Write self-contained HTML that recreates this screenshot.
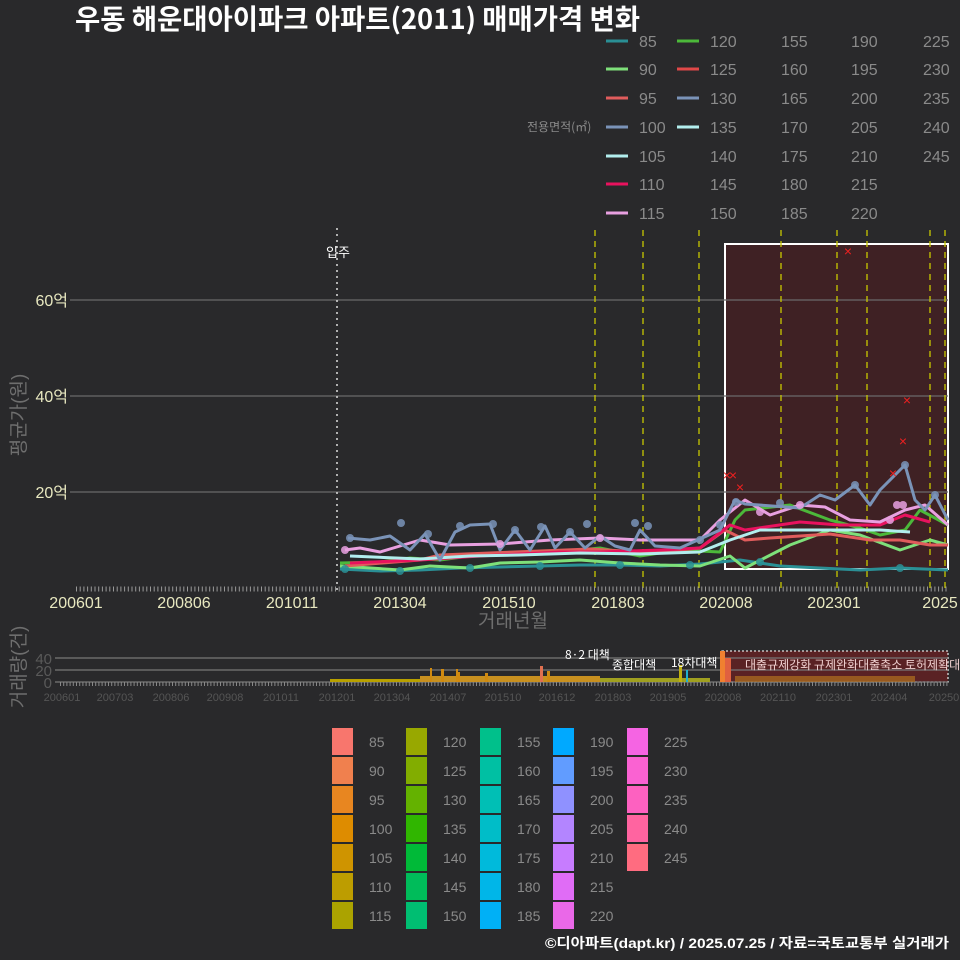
<!DOCTYPE html>
<html><head><meta charset="utf-8"><style>
body{margin:0;background:#29292b;}
svg{display:block;font-family:"Liberation Sans","Noto Sans CJK KR",sans-serif;}
</style></head><body>
<svg width="960" height="960" viewBox="0 0 960 960" xmlns="http://www.w3.org/2000/svg">
<rect width="960" height="960" fill="#29292b"/>
<text x="75" y="29" font-size="28" font-weight="bold" fill="#fff" font-family="Noto Sans CJK KR, sans-serif" textLength="565" lengthAdjust="spacingAndGlyphs">우동 해운대아이파크 아파트(2011) 매매가격 변화</text>

<!-- top legend -->
<g font-size="16" fill="#8a8a8a" font-family="Liberation Sans, sans-serif">
<text x="527" y="131" font-size="12" font-family="Noto Sans CJK KR, sans-serif">전용면적(㎡)</text>
<g stroke-width="3">
<line x1="606" y1="41" x2="628" y2="41" stroke="#2a8f95"/>
<line x1="606" y1="69" x2="628" y2="69" stroke="#7ee07a"/>
<line x1="606" y1="98" x2="628" y2="98" stroke="#e05c5c"/>
<line x1="606" y1="127" x2="628" y2="127" stroke="#7a93b8"/>
<line x1="606" y1="156" x2="628" y2="156" stroke="#b2eeee"/>
<line x1="606" y1="184" x2="628" y2="184" stroke="#e8125e"/>
<line x1="606" y1="213" x2="628" y2="213" stroke="#e8a0e0"/>
<line x1="677" y1="41" x2="699" y2="41" stroke="#4cb83a"/>
<line x1="677" y1="69" x2="699" y2="69" stroke="#e04848"/>
<line x1="677" y1="98" x2="699" y2="98" stroke="#7a93b8"/>
<line x1="677" y1="127" x2="699" y2="127" stroke="#b2eeee"/>
</g>
<text x="639" y="47">85</text><text x="639" y="75">90</text><text x="639" y="104">95</text><text x="639" y="133">100</text><text x="639" y="162">105</text><text x="639" y="190">110</text><text x="639" y="219">115</text>
<text x="710" y="47">120</text><text x="710" y="75">125</text><text x="710" y="104">130</text><text x="710" y="133">135</text><text x="710" y="162">140</text><text x="710" y="190">145</text><text x="710" y="219">150</text>
<text x="781" y="47">155</text><text x="781" y="75">160</text><text x="781" y="104">165</text><text x="781" y="133">170</text><text x="781" y="162">175</text><text x="781" y="190">180</text><text x="781" y="219">185</text>
<text x="851" y="47">190</text><text x="851" y="75">195</text><text x="851" y="104">200</text><text x="851" y="133">205</text><text x="851" y="162">210</text><text x="851" y="190">215</text><text x="851" y="219">220</text>
<text x="923" y="47">225</text><text x="923" y="75">230</text><text x="923" y="104">235</text><text x="923" y="133">240</text><text x="923" y="162">245</text>
</g>

<!-- main chart -->
<rect x="725" y="244" width="223" height="325" fill="#3f2124" stroke="#fff" stroke-width="2"/>
<g stroke="#6a6a6a" stroke-width="1.3">
<line x1="70" y1="300" x2="948" y2="300"/><line x1="70" y1="396" x2="948" y2="396"/><line x1="70" y1="492" x2="948" y2="492"/>
</g>
<g font-size="16" fill="#e8e8c0" text-anchor="end" font-family="Liberation Sans, Noto Sans CJK KR, sans-serif">
<text x="68" y="306">60억</text><text x="68" y="402">40억</text><text x="68" y="498">20억</text>
</g>
<text transform="translate(25,415) rotate(-90)" text-anchor="middle" font-size="19" fill="#6e6e6e">평균가(원)</text>
<line x1="337" y1="228" x2="337" y2="592" stroke="#ddd" stroke-width="1.5" stroke-dasharray="2,4"/>
<text x="338" y="257" font-size="13" fill="#fff" text-anchor="middle">입주</text>
<g stroke="#c8c800" stroke-width="1.3" stroke-dasharray="6,5">
<line x1="595" y1="230" x2="595" y2="592"/><line x1="643" y1="230" x2="643" y2="592"/><line x1="699" y1="230" x2="699" y2="592"/><line x1="781" y1="230" x2="781" y2="592"/><line x1="837" y1="230" x2="837" y2="592"/><line x1="867" y1="230" x2="867" y2="592"/><line x1="930" y1="230" x2="930" y2="592"/><line x1="945" y1="230" x2="945" y2="592"/>
</g>
<line x1="76" y1="589" x2="948" y2="589" stroke="#999" stroke-width="5" stroke-dasharray="1,2.7"/>

<g fill="none" stroke-width="3" stroke-linejoin="round">
<polyline stroke="#2a8f95" points="340,569 380,571 420,570 460,568 500,567 540,566 580,565 620,565 660,566 700,564 720,562 740,560 780,566 820,568 860,570 900,568 948,570"/>
<polyline stroke="#7ee07a" points="340,566 400,570 430,566 470,568 500,563 540,562 580,560 620,563 660,565 700,566 730,556 745,568 790,545 830,530 860,535 900,550 930,540 948,545"/>
<polyline stroke="#4cb83a" points="340,563 380,562 410,558 440,560 470,556 500,553 540,552 580,550 600,548 640,556 680,550 720,552 735,520 745,510 790,505 830,520 860,528 880,535 905,530 920,510 948,525"/>
<polyline stroke="#e05c5c" points="345,566 420,560 440,555 490,553 540,551 590,549 640,552 680,550 700,548 725,530 745,540 770,538 830,534 870,540 900,540 930,545 948,545"/>
<polyline stroke="#e8125e" points="350,563 420,560 480,556 520,554 560,552 600,552 660,550 700,548 730,525 745,530 800,522 840,525 880,525 905,515 930,522"/>
<polyline stroke="#b2eeee" points="350,556 420,559 470,556 520,555 580,553 640,554 700,552 730,540 760,530 820,530 880,530 910,532"/>
<polyline stroke="#e8a0e0" points="345,550 360,548 380,552 400,546 420,540 450,545 500,544 550,540 600,538 640,540 700,540 720,520 745,500 770,515 800,505 825,507 850,520 880,522 905,510 925,505 948,525"/>
<polyline stroke="#7a93b8" points="348,538 370,540 390,536 410,550 425,534 440,560 455,532 470,525 490,524 500,550 515,530 530,550 545,526 555,548 570,532 585,548 600,536 615,546 630,550 640,530 655,546 680,548 720,530 735,500 745,504 800,508 820,495 835,500 855,485 870,505 880,490 905,465 915,500 925,510 935,495 948,520"/>
</g>
<g fill="#7a93b8" opacity="0.85">
<circle cx="401" cy="523" r="4"/><circle cx="460" cy="526" r="4"/><circle cx="493" cy="524" r="4"/><circle cx="541" cy="527" r="4"/><circle cx="587" cy="524" r="4"/><circle cx="635" cy="523" r="4"/><circle cx="648" cy="526" r="4"/><circle cx="720" cy="525" r="4"/><circle cx="736" cy="502" r="4"/><circle cx="905" cy="465" r="4"/><circle cx="855" cy="485" r="4"/><circle cx="935" cy="495" r="4"/><circle cx="780" cy="503" r="4"/>
<circle cx="350" cy="538" r="4"/><circle cx="428" cy="534" r="4"/><circle cx="515" cy="530" r="4"/><circle cx="570" cy="532" r="4"/><circle cx="700" cy="540" r="4"/>
</g>
<g fill="#2a8f95" opacity="0.85">
<circle cx="345" cy="569" r="4"/><circle cx="400" cy="571" r="4"/><circle cx="470" cy="568" r="4"/><circle cx="540" cy="566" r="4"/><circle cx="620" cy="565" r="4"/><circle cx="690" cy="565" r="4"/><circle cx="760" cy="562" r="4"/><circle cx="900" cy="568" r="4"/>
</g>
<g fill="#e8a0e0" opacity="0.85">
<circle cx="897" cy="505" r="4"/><circle cx="903" cy="505" r="4"/><circle cx="890" cy="520" r="4"/><circle cx="800" cy="505" r="4"/><circle cx="760" cy="512" r="4"/><circle cx="345" cy="550" r="4"/><circle cx="500" cy="544" r="4"/><circle cx="600" cy="538" r="4"/>
</g>
<g font-size="14" fill="#ee2020" text-anchor="middle">
<text x="848" y="256">×</text><text x="907" y="405">×</text><text x="903" y="446">×</text><text x="893" y="478">×</text>
<text x="727" y="480">×</text><text x="733" y="480">×</text><text x="740" y="492">×</text>
</g>

<g font-size="16" fill="#e8e8c0" text-anchor="middle" font-family="Liberation Sans, sans-serif">
<text x="76" y="608">200601</text><text x="184" y="608">200806</text><text x="292" y="608">201011</text><text x="400" y="608">201304</text><text x="509" y="608">201510</text><text x="618" y="608">201803</text><text x="726" y="608">202008</text><text x="834" y="608">202301</text><text x="940" y="608">2025</text>
</g>
<text x="513" y="627" font-size="19" fill="#6e6e6e" text-anchor="middle">거래년월</text>

<!-- bar chart -->
<rect x="722" y="651" width="226" height="31" fill="#5a2224" stroke="#ddd" stroke-width="1.3" stroke-dasharray="2,2"/>
<g stroke="#777" stroke-width="1.3">
<line x1="55" y1="658" x2="948" y2="658"/><line x1="55" y1="670" x2="948" y2="670"/><line x1="55" y1="682" x2="948" y2="682"/>
</g>
<g font-size="15" fill="#5a5a5a" text-anchor="end"><text x="52" y="664">40</text><text x="52" y="676">20</text><text x="52" y="688">0</text></g>
<text transform="translate(25,667) rotate(-90)" text-anchor="middle" font-size="19" fill="#6e6e6e">거래량(건)</text>
<line x1="60" y1="684" x2="948" y2="684" stroke="#888" stroke-width="4" stroke-dasharray="1,2.2"/>
<g fill="#d08a10">
<rect x="330" y="679" width="100" height="3" fill="#b8a000"/>
<rect x="420" y="676" width="180" height="6" fill="#c89020"/>
<rect x="430" y="668" width="2" height="14"/><rect x="441" y="669" width="3" height="13"/><rect x="456" y="669" width="2" height="13"/><rect x="458" y="672" width="2" height="10"/><rect x="485" y="673" width="3" height="9"/><rect x="540" y="666" width="3" height="16" fill="#e07050"/><rect x="547" y="671" width="3" height="11"/><rect x="600" y="678" width="110" height="4" fill="#a0a020"/><rect x="679" y="665" width="3" height="17" fill="#c0b010"/><rect x="686" y="670" width="2" height="12" fill="#20b0d0"/><rect x="720" y="651" width="5" height="31" fill="#f08030"/><rect x="725" y="658" width="6" height="24" fill="#e06040"/><rect x="735" y="676" width="180" height="6" fill="#b07020" opacity="0.7"/>
</g>
<g font-size="12" fill="#fff" font-family="Noto Sans CJK KR, sans-serif">
<text x="565" y="659">8·2 대책</text><text x="612" y="669">종합대책</text><text x="671" y="667">18차대책</text>
<text x="745" y="669" fill="#f0d0d0">대출규제강화 규제완화대출축소 토허제확대</text>
</g>
<g font-size="11" fill="#555" text-anchor="middle">
<text x="62" y="701">200601</text><text x="115" y="701">200703</text><text x="171" y="701">200806</text><text x="225" y="701">200908</text><text x="281" y="701">201011</text><text x="337" y="701">201201</text><text x="392" y="701">201304</text><text x="448" y="701">201407</text><text x="503" y="701">201510</text><text x="557" y="701">201612</text><text x="613" y="701">201803</text><text x="668" y="701">201905</text><text x="723" y="701">202008</text><text x="778" y="701">202110</text><text x="834" y="701">202301</text><text x="889" y="701">202404</text><text x="944" y="701">20250</text>
</g>

<!-- bottom legend -->
<g>
<rect x="332" y="728" width="21" height="27" fill="#f8766d"/><rect x="332" y="757" width="21" height="27" fill="#f0804e"/><rect x="332" y="786" width="21" height="27" fill="#e88620"/><rect x="332" y="815" width="21" height="27" fill="#de8c00"/><rect x="332" y="844" width="21" height="27" fill="#cf9400"/><rect x="332" y="873" width="21" height="27" fill="#bd9d00"/><rect x="332" y="902" width="21" height="27" fill="#aba300"/>
<rect x="406" y="728" width="21" height="27" fill="#98a800"/><rect x="406" y="757" width="21" height="27" fill="#82ad00"/><rect x="406" y="786" width="21" height="27" fill="#64b200"/><rect x="406" y="815" width="21" height="27" fill="#30b600"/><rect x="406" y="844" width="21" height="27" fill="#00ba38"/><rect x="406" y="873" width="21" height="27" fill="#00bc5a"/><rect x="406" y="902" width="21" height="27" fill="#00be72"/>
<rect x="480" y="728" width="21" height="27" fill="#00c08b"/><rect x="480" y="757" width="21" height="27" fill="#00c0a3"/><rect x="480" y="786" width="21" height="27" fill="#00bfb5"/><rect x="480" y="815" width="21" height="27" fill="#00bdc8"/><rect x="480" y="844" width="21" height="27" fill="#00badb"/><rect x="480" y="873" width="21" height="27" fill="#00b6e8"/><rect x="480" y="902" width="21" height="27" fill="#00b0f6"/>
<rect x="553" y="728" width="21" height="27" fill="#00a9ff"/><rect x="553" y="757" width="21" height="27" fill="#619cff"/><rect x="553" y="786" width="21" height="27" fill="#8f91ff"/><rect x="553" y="815" width="21" height="27" fill="#b385ff"/><rect x="553" y="844" width="21" height="27" fill="#c77cff"/><rect x="553" y="873" width="21" height="27" fill="#e06cf6"/><rect x="553" y="902" width="21" height="27" fill="#ea68e8"/>
<rect x="627" y="728" width="21" height="27" fill="#f564e3"/><rect x="627" y="757" width="21" height="27" fill="#fa62d2"/><rect x="627" y="786" width="21" height="27" fill="#fd61c0"/><rect x="627" y="815" width="21" height="27" fill="#ff64a0"/><rect x="627" y="844" width="21" height="27" fill="#ff6c80"/>
</g>
<g font-size="14" fill="#8a8a8a" font-family="Liberation Sans, sans-serif">
<text x="369" y="747">85</text><text x="369" y="776">90</text><text x="369" y="805">95</text><text x="369" y="834">100</text><text x="369" y="863">105</text><text x="369" y="892">110</text><text x="369" y="921">115</text>
<text x="443" y="747">120</text><text x="443" y="776">125</text><text x="443" y="805">130</text><text x="443" y="834">135</text><text x="443" y="863">140</text><text x="443" y="892">145</text><text x="443" y="921">150</text>
<text x="517" y="747">155</text><text x="517" y="776">160</text><text x="517" y="805">165</text><text x="517" y="834">170</text><text x="517" y="863">175</text><text x="517" y="892">180</text><text x="517" y="921">185</text>
<text x="590" y="747">190</text><text x="590" y="776">195</text><text x="590" y="805">200</text><text x="590" y="834">205</text><text x="590" y="863">210</text><text x="590" y="892">215</text><text x="590" y="921">220</text>
<text x="664" y="747">225</text><text x="664" y="776">230</text><text x="664" y="805">235</text><text x="664" y="834">240</text><text x="664" y="863">245</text>
</g>
<text x="949" y="948" font-size="14" font-weight="bold" fill="#fff" text-anchor="end" textLength="404" lengthAdjust="spacingAndGlyphs">©디아파트(dapt.kr) / 2025.07.25 / 자료=국토교통부 실거래가</text>
</svg>
</body></html>
